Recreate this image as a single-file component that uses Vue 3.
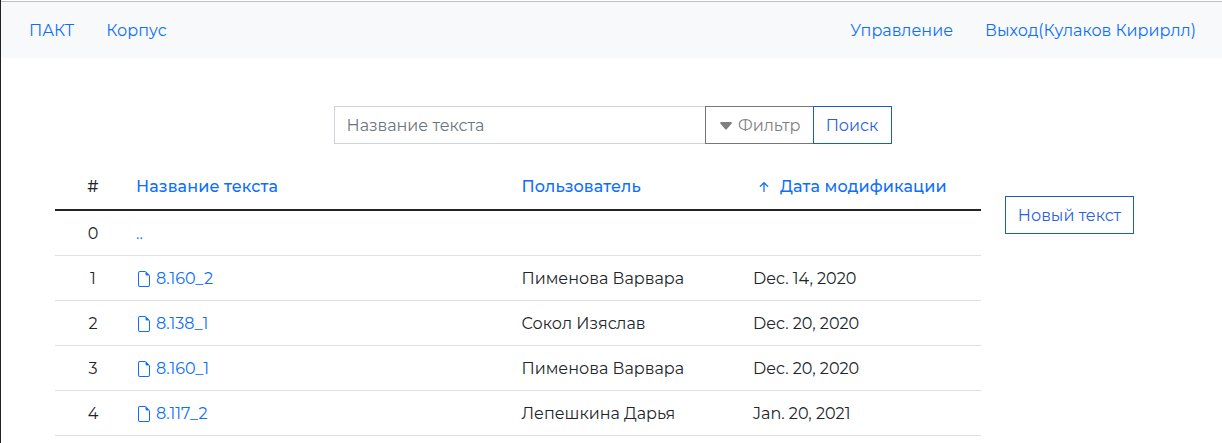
<script setup>
const rows = [
  { n: 0, name: '..', user: '', date: '' },
  { n: 1, name: '8.160_2', user: 'Пименова Варвара', date: 'Dec. 14, 2020' },
  { n: 2, name: '8.138_1', user: 'Сокол Изяслав', date: 'Dec. 20, 2020' },
  { n: 3, name: '8.160_1', user: 'Пименова Варвара', date: 'Dec. 20, 2020' },
  { n: 4, name: '8.117_2', user: 'Лепешкина Дарья', date: 'Jan. 20, 2021' },
]
</script>

<template>
  <div class="page">
    <nav class="navbar">
      <a class="brand">ПАКТ</a>
      <a class="corpus">Корпус</a>
      <a class="manage">Управление</a>
      <a class="logout">Выход(Кулаков Кирирлл)</a>
    </nav>
    <form class="search" @submit.prevent>
      <input type="text" placeholder="Название текста" />
      <button type="button" class="filter">
        <svg width="16" height="16" viewBox="0 0 16 16" fill="currentColor">
          <path d="M7.247 11.14 2.451 5.658C1.885 5.013 2.345 4 3.204 4h9.592a1 1 0 0 1 .753 1.659l-4.796 5.48a1 1 0 0 1-1.506 0z" />
        </svg>
        <span>Фильтр</span>
      </button>
      <button type="submit" class="submit">Поиск</button>
    </form>
    <main class="content">
      <table>
        <thead>
          <tr>
            <th class="num">#</th>
            <th class="name"><a>Название текста</a></th>
            <th class="user"><a>Пользователь</a></th>
            <th class="date">
              <a class="sort">
                <svg width="20" height="20" viewBox="0 0 16 16" fill="currentColor">
                  <path fill-rule="evenodd" d="M8 12a.5.5 0 0 0 .5-.5V5.707l2.146 2.147a.5.5 0 0 0 .708-.708l-3-3a.5.5 0 0 0-.708 0l-3 3a.5.5 0 1 0 .708.708L7.5 5.707V11.5a.5.5 0 0 0 .5.5z" />
                </svg>
                <span>Дата модификации</span>
              </a>
            </th>
          </tr>
        </thead>
        <tbody>
          <tr v-for="row in rows" :key="row.n">
            <td class="num">{{ row.n }}</td>
            <td class="name">
              <a class="file">
                <svg v-if="row.n" width="16" height="16" viewBox="0 0 16 16" fill="currentColor">
                  <path d="M4 0h5.500v1H4a1 1 0 0 0-1 1v12a1 1 0 0 0 1 1h8a1 1 0 0 0 1-1V4.500h1V14a2 2 0 0 1-2 2H4a2 2 0 0 1-2-2V2a2 2 0 0 1 2-2z" />
                  <path d="M9.500 3V0L14 4.500h-3A1.500 1.500 0 0 1 9.500 3z" />
                </svg>
                <span>{{ row.name }}</span>
              </a>
            </td>
            <td class="user">{{ row.user }}</td>
            <td class="date">{{ row.date }}</td>
          </tr>
        </tbody>
      </table>
      <button type="button" class="create">Новый текст</button>
    </main>
  </div>
</template>

<style>
body {
  margin: 0;
  background: #fff;
  overflow: hidden;
}
</style>

<style scoped>
.page {
  box-sizing: border-box;
  width: 1222px;
  height: 443px;
  overflow: hidden;
  border-left: 1px solid #212121;
  font: 400 16px/24px Montserrat, Inter, sans-serif;
  color: #212529;
}
a {
  color: #0d6efd;
  text-decoration: none;
  white-space: nowrap;
}
.navbar {
  box-sizing: border-box;
  display: flex;
  align-items: center;
  height: 57px;
  margin-top: 1px;
  padding: 2px 26px 0 28px;
  border-top: 1px solid #bfc0c1;
  background: #f8f9fa;
}
.corpus { margin-left: 32px; }
.manage { margin-left: auto; }
.logout { margin-left: 32px; }
.search {
  display: flex;
  width: 558px;
  height: 38px;
  margin: 48px 0 0 333px;
}
input {
  box-sizing: border-box;
  flex: 1;
  min-width: 0;
  padding: 8px 12px 6px 11.500px;
  border: 1px solid #ced4da;
  border-right: 0;
  border-radius: 0;
  font: inherit;
}
input::placeholder { color: #6c757d; opacity: 1; }
button {
  box-sizing: border-box;
  height: 38px;
  padding: 2px 0 0;
  border: 1px solid #1b5acb;
  background: #fff;
  color: #2b62d9;
  font: inherit;
  white-space: nowrap;
}
.filter {
  display: flex;
  align-items: center;
  gap: 4px;
  width: 108px;
  padding-left: 12px;
  border-color: #777;
  border-right: 0;
  color: #808080;
}
.submit { width: 79px; padding-right: 1px; }
.content {
  display: flex;
  align-items: flex-start;
  gap: 24px;
  margin: 20px 0 0 54px;
}
table {
  width: 926px;
  table-layout: fixed;
  border-collapse: separate;
  border-spacing: 0;
}
th, td {
  box-sizing: border-box;
  height: 45px;
  padding: 2px 8px 0;
  border-bottom: 1px solid #dee2e6;
  text-align: left;
  vertical-align: middle;
  white-space: nowrap;
}
th {
  height: 47px;
  padding-top: 0;
  border-bottom: 2px solid #212529;
  font-weight: 500;
  letter-spacing: 0.13px;
}
.num { width: 73px; padding-right: 6px; padding-left: 9px; text-align: center; }
.name { width: 386px; }
.user { width: 231px; padding-left: 7.500px; }
.sort, .file { display: flex; align-items: center; }
.sort svg { margin: 0 6px 0 1px; }
.file svg { margin-right: 4px; }
.create { width: 129px; margin-top: 32px; }
</style>
